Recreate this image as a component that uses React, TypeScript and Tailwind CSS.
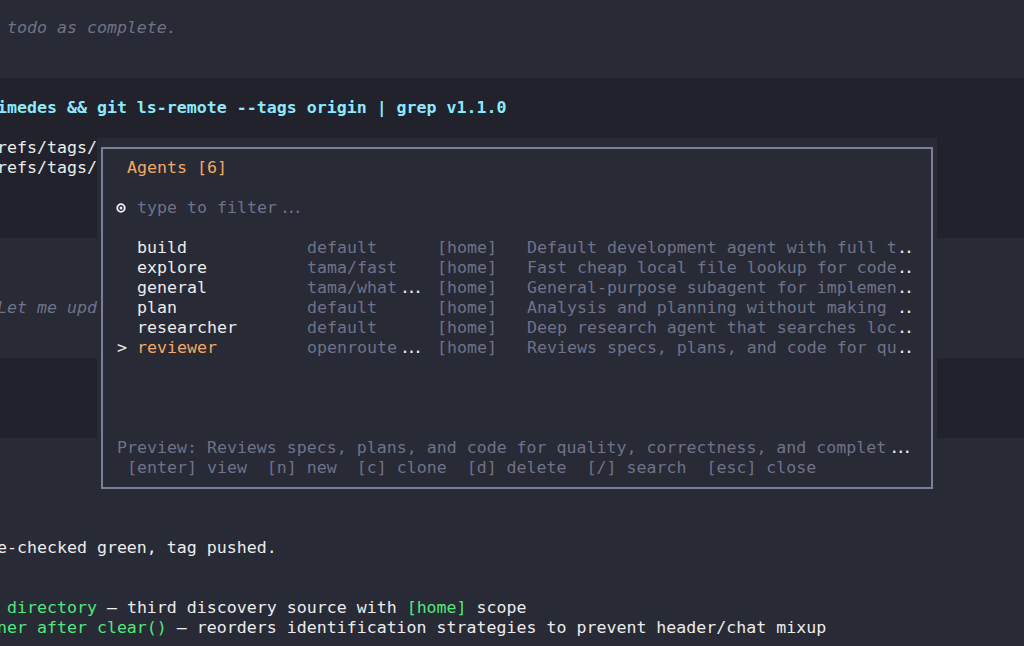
import React from "react";

const W = "text-[#ececec]";
const G = "text-[#6f7288]";
const OR = "text-[#f5a862]";

function Dots2({ white }: { white?: boolean }) {
  return (
    <span className={`inline-block w-[20px] pl-[3px] tracking-[-3.5px] ${white ? W : G}`}>...</span>
  );
}
function Dots1() {
  return <span className={`inline-block w-[10px] tracking-[-3px] ${W}`}>..</span>;
}

const agents = [
  { name: "build", model: "default", trunc: false, desc: "Default development agent with full t" },
  { name: "explore", model: "tama/fast", trunc: false, desc: "Fast cheap local file lookup for code" },
  { name: "general", model: "tama/what", trunc: true, desc: "General-purpose subagent for implemen" },
  { name: "plan", model: "default", trunc: false, desc: "Analysis and planning without making " },
  { name: "researcher", model: "default", trunc: false, desc: "Deep research agent that searches loc" },
  { name: "reviewer", model: "openroute", trunc: true, desc: "Reviews specs, plans, and code for qu", sel: true },
];

function Row({ children, className = "" }: { children?: React.ReactNode; className?: string }) {
  return <div className={`h-[20px] whitespace-pre -ml-[3px] ${className}`}>{children}</div>;
}

export default function App() {
  return (
    <div className="relative w-[1024px] h-[646px] overflow-hidden bg-[#282a36] font-['DejaVu_Sans_Mono',monospace] text-[16.6px] leading-[20px]">
      <div className="-mt-[2px] flex flex-col">
        {/* band A: rows 0-3 */}
        <div className="bg-[#282a36]">
          <Row />
          <Row className={`italic ${G}`}> todo as complete.</Row>
          <Row />
          <Row />
        </div>
        {/* band B: rows 4-11 */}
        <div className="bg-[#21222c]">
          <Row />
          <Row className="font-bold text-[#8be9fd]">imedes &amp;&amp; git ls-remote --tags origin | grep v1.1.0</Row>
          <Row />
          <Row className={W}>refs/tags/</Row>
          <Row className={W}>refs/tags/</Row>
          <Row />
          <Row />
          <Row />
        </div>
        {/* band C: rows 12-17 */}
        <div className="bg-[#282a36]">
          <Row />
          <Row />
          <Row />
          <Row className={`italic ${G}`}>Let me upd</Row>
          <Row />
          <Row />
        </div>
        {/* band D: rows 18-21 */}
        <div className="bg-[#21222c]">
          <Row />
          <Row />
          <Row />
          <Row />
        </div>
        {/* band E: rows 22-32 */}
        <div className="bg-[#282a36]">
          <Row />
          <Row />
          <Row />
          <Row />
          <Row />
          <Row className={W}>e-checked green, tag pushed.</Row>
          <Row />
          <Row />
          <Row className={W}>
            {" "}
            <span className="text-[#50e87a]">directory</span> — third discovery source with{" "}
            <span className="text-[#50e87a]">[home]</span> scope
          </Row>
          <Row className={W}>
            <span className="text-[#50e87a]">ner after clear()</span> — reorders identification strategies to prevent header/chat mixup
          </Row>
          <Row />
        </div>
      </div>

      {/* Agents modal overlay */}
      <div className="absolute left-[97px] top-[138px] w-[840px] h-[360px] bg-[#282a36] pl-[4px] pt-[9px]">
        <div className="w-[832px] h-[342px] border-2 border-[#7c7f9c] pt-[9px] pl-[14px] whitespace-pre">
          <div className={`h-[20px] pl-[10px] ${OR}`}>Agents [6]</div>
          <div className="h-[20px]" />
          <div className="h-[20px] flex">
            <span className="w-[20px] flex items-center">
              <svg width="11" height="11" viewBox="0 0 11 11" className="ml-[-1px] mt-[1px]">
                <circle cx="5" cy="5" r="3.8" fill="none" stroke="#ececec" strokeWidth="1.8" />
                <circle cx="5" cy="5" r="1.5" fill="#ececec" />
              </svg>
            </span>
            <span className={G}>type to filter</span>
            <Dots2 />
          </div>
          <div className="h-[20px]" />
          {agents.map((a) => (
            <div key={a.name} className="h-[20px] flex">
              <span className={`w-[20px] ${W}`}>{a.sel ? ">" : ""}</span>
              <span className={`w-[170px] ${a.sel ? OR : W}`}>{a.name}</span>
              <span className={`w-[130px] ${G}`}>
                {a.model}
                {a.trunc ? <Dots2 white /> : null}
              </span>
              <span className={`w-[90px] ${G}`}>[home]</span>
              <span className={`w-[370px] ${G}`}>{a.desc}</span>
              <Dots1 />
            </div>
          ))}
          <div className="h-[80px]" />
          <div className="h-[20px] flex">
            <span className={G}>Preview: Reviews specs, plans, and code for quality, correctness, and complet</span>
            <Dots2 white />
          </div>
          <div className={`h-[20px] ${G}`}> [enter] view  [n] new  [c] clone  [d] delete  [/] search  [esc] close</div>
        </div>
      </div>
    </div>
  );
}
